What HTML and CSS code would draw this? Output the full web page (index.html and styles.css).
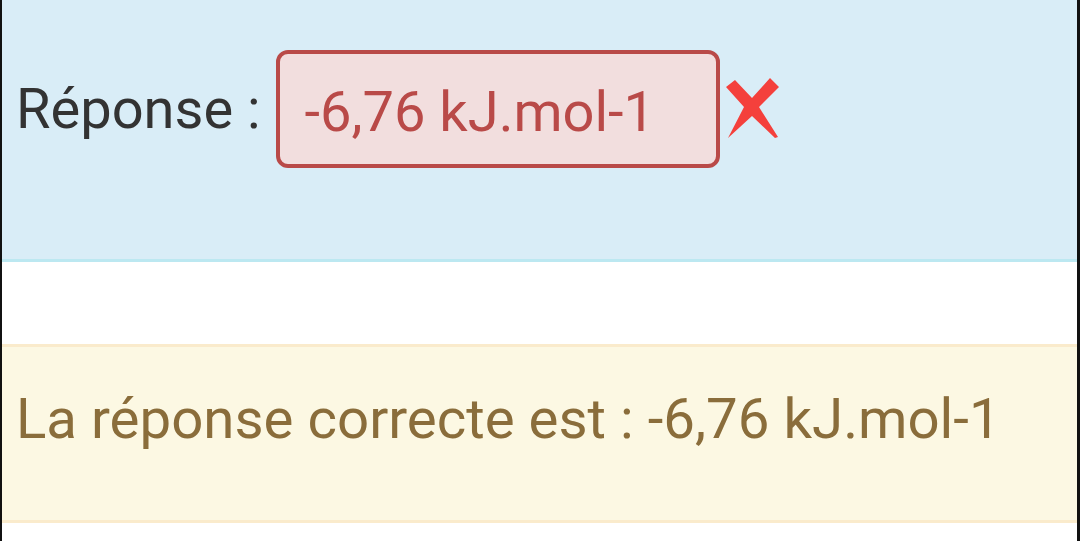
FILE: index.html
```html
<!DOCTYPE html>
<html lang="fr">
<head>
<meta charset="utf-8">
<title>Réponse</title>
<link rel="stylesheet" href="styles.css">
</head>
<body>
<div class="frame">
  <div class="answer-panel">
    <div class="answer-row">
      <span class="label">Réponse :</span>
      <span class="answer-box">-6,76 kJ.mol-1</span>
      <svg class="wrong-icon" width="54" height="62" viewBox="0 0 54 62" aria-hidden="true">
        <path d="M0 10 L9 3 L26 21 L44 1 L53 10 L33 30 L52 60 L49 61 L26 39 L2 61 L18 30 Z" fill="#f4403c"/>
      </svg>
    </div>
  </div>
  <div class="spacer"></div>
  <div class="correct-panel">
    <p class="correct-text">La réponse correcte est : -6,76 kJ.mol-1</p>
  </div>
</div>
</body>
</html>
```

FILE: styles.css
```css
html, body {
  margin: 0;
  padding: 0;
  background: #ffffff;
}

.frame {
  width: 1080px;
  height: 541px;
  box-sizing: border-box;
  border-left: 2px solid #111;
  border-right: 3px solid #111;
  background: #ffffff;
  font-family: Roboto, "Noto Sans", sans-serif;
  display: flex;
  flex-direction: column;
}

.answer-panel {
  height: 262px;
  box-sizing: border-box;
  background: #d9edf7;
  border-bottom: 3px solid #bce8f1;
  padding: 50px 0 0 14px;
}

.answer-row {
  display: flex;
  align-items: center;
  height: 118px;
}

.label {
  font-size: 56px;
  color: #333333;
  line-height: 1;
}

.answer-box {
  margin-left: 15px;
  width: 444px;
  height: 118px;
  box-sizing: border-box;
  border: 4px solid #b94a48;
  border-radius: 12px;
  background: #f2dede;
  color: #b94a48;
  font-size: 56px;
  padding-left: 25px;
  display: flex;
  align-items: center;
  padding-top: 6px;
}

.wrong-icon {
  margin-left: 6px;
  margin-top: -2px;
}

.spacer {
  height: 82px;
}

.correct-panel {
  height: 179px;
  box-sizing: border-box;
  background: #fcf8e3;
  border-top: 3px solid #faebcc;
  border-bottom: 3px solid #faebcc;
  display: flex;
  align-items: center;
  padding-left: 14px;
  padding-bottom: 28px;
}

.correct-text {
  margin: 0;
  font-size: 56.4px;
  color: #8a6d3b;
  line-height: 1;
}
```
